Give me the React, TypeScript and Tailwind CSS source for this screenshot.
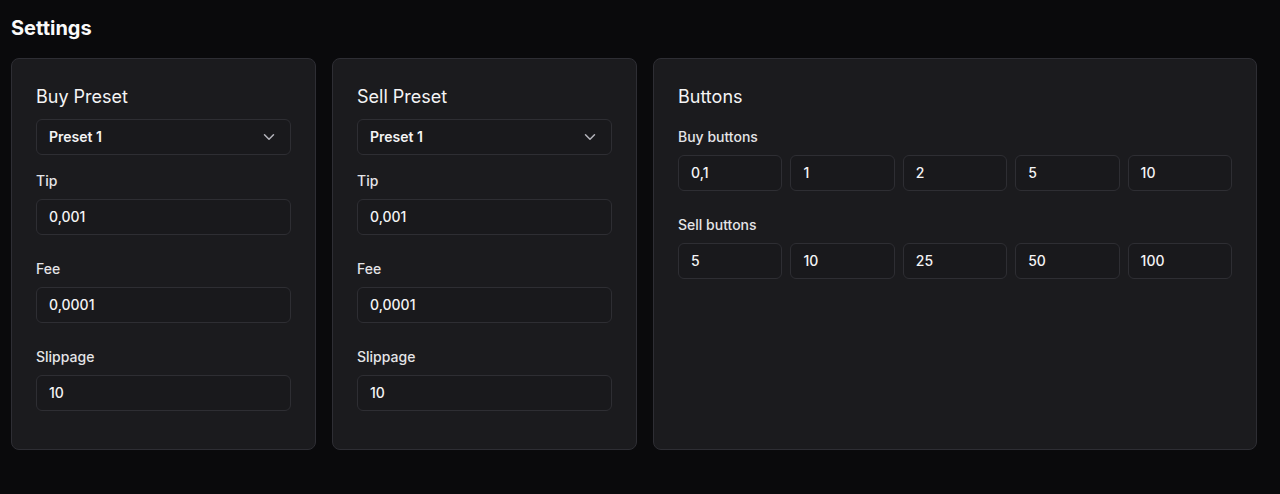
import { ChevronDown } from "lucide-react"

const presetFields = [
  { label: "Tip", value: "0,001" },
  { label: "Fee", value: "0,0001" },
  { label: "Slippage", value: "10" },
]

const buyButtons = ["0,1", "1", "2", "5", "10"]
const sellButtons = ["5", "10", "25", "50", "100"]

function Field({ value }: { value: string }) {
  return (
    <div className="h-9 rounded-md border border-[#2e2e33] bg-[#19191c] px-3 flex items-center text-sm font-medium text-[#f4f4f5]">
      {value}
    </div>
  )
}

function PresetCard({ title }: { title: string }) {
  return (
    <div className="rounded-lg border border-[#2e2e34] bg-[#1b1b1e] px-6 pt-6">
      <h2 className="text-lg leading-7 text-[#f4f4f5] mb-2">{title}</h2>
      {/* preset select */}
      <div className="h-9 rounded-md border border-[#2e2e33] bg-[#19191c] pl-3 pr-3 flex items-center justify-between text-sm font-semibold text-[#f4f4f5]">
        <span>Preset 1</span>
        <ChevronDown className="h-[18px] w-[18px] text-[#b4b4bb]" strokeWidth={2} />
      </div>
      <div className="mt-4 flex flex-col gap-6">
        {presetFields.map((f) => (
          <div key={f.label} className="flex flex-col gap-2">
            <label className="text-sm leading-5 font-medium text-[#e4e4e7]">{f.label}</label>
            <Field value={f.value} />
          </div>
        ))}
      </div>
    </div>
  )
}

export default function App() {
  return (
    <div
      className="min-h-[494px] bg-[#0a0a0c] pt-[14px] pl-[11px] pr-[23px]"
      style={{ fontFamily: "Inter, 'Liberation Sans', sans-serif" }}
    >
      <h1 className="text-xl leading-7 font-bold text-[#fafafa] mb-4">Settings</h1>
      <div className="grid grid-cols-[305px_305px_1fr] gap-4 h-[392px]">
        <PresetCard title="Buy Preset" />
        <PresetCard title="Sell Preset" />

        <div className="rounded-lg border border-[#2e2e34] bg-[#1b1b1e] p-6">
          <h2 className="text-lg leading-7 text-[#f4f4f5] mb-4">Buttons</h2>
          <div className="flex flex-col gap-6">
            <div className="flex flex-col gap-2">
              <label className="text-sm leading-5 font-medium text-[#e4e4e7]">Buy buttons</label>
              <div className="grid grid-cols-5 gap-2">
                {buyButtons.map((b, i) => (
                  <Field key={i} value={b} />
                ))}
              </div>
            </div>
            <div className="flex flex-col gap-2">
              <label className="text-sm leading-5 font-medium text-[#e4e4e7]">Sell buttons</label>
              <div className="grid grid-cols-5 gap-2">
                {sellButtons.map((b, i) => (
                  <Field key={i} value={b} />
                ))}
              </div>
            </div>
          </div>
        </div>
      </div>
    </div>
  )
}
